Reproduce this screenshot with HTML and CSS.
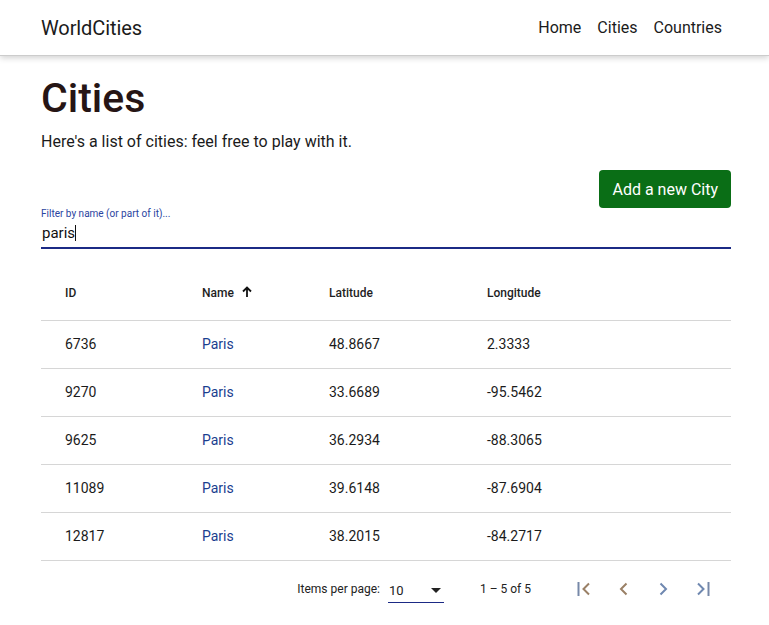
FILE: index.html
```html
<!DOCTYPE html>
<html>
<head>
<meta charset="utf-8">
<link rel="stylesheet" href="styles.css">
</head>
<body>
<header class="toolbar">
  <span class="brand">WorldCities</span>
  <nav class="nav">
    <a>Home</a>
    <a>Cities</a>
    <a>Countries</a>
  </nav>
</header>
<main class="content">
  <h1 class="title">Cities</h1>
  <p class="intro">Here's a list of cities: feel free to play with it.</p>
  <div class="actions">
    <button class="btn-add">Add a new City</button>
  </div>
  <div class="field">
    <label class="field-label">Filter by name (or part of it)...</label>
    <div class="field-input">paris<span class="caret"></span></div>
  </div>
  <table class="grid">
    <thead>
      <tr>
        <th class="c-id">ID</th>
        <th class="c-name">Name <svg class="sort" width="12" height="12" viewBox="0 0 12 12"><path d="M6 11V2M2 5.5 6 1.5l4 4" fill="none" stroke="#111" stroke-width="1.8"/></svg></th>
        <th class="c-lat">Latitude</th>
        <th class="c-lon">Longitude</th>
      </tr>
    </thead>
    <tbody>
      <tr><td class="c-id">6736</td><td class="c-name"><a>Paris</a></td><td>48.8667</td><td>2.3333</td></tr>
      <tr><td class="c-id">9270</td><td class="c-name"><a>Paris</a></td><td>33.6689</td><td>-95.5462</td></tr>
      <tr><td class="c-id">9625</td><td class="c-name"><a>Paris</a></td><td>36.2934</td><td>-88.3065</td></tr>
      <tr><td class="c-id">11089</td><td class="c-name"><a>Paris</a></td><td>39.6148</td><td>-87.6904</td></tr>
      <tr><td class="c-id">12817</td><td class="c-name"><a>Paris</a></td><td>38.2015</td><td>-84.2717</td></tr>
    </tbody>
  </table>
  <div class="paginator">
    <span class="pp-label">Items per page:</span>
    <div class="pp-select"><span>10</span><svg width="10" height="5" viewBox="0 0 10 5"><path d="M0 0h10L5 5z" fill="#222"/></svg></div>
    <span class="range">1 – 5 of 5</span>
    <div class="pg-btns">
      <svg width="24" height="24" viewBox="0 0 24 24"><path d="M5.5 5v14" stroke="#7688a8" stroke-width="2" fill="none"/><path d="M16 6.5 10.5 12l5.5 5.5" stroke="#9a8066" stroke-width="2" fill="none"/></svg>
      <svg width="24" height="24" viewBox="0 0 24 24"><path d="M14.5 6.5 9 12l5.5 5.5" stroke="#9a8066" stroke-width="2" fill="none"/></svg>
      <svg width="24" height="24" viewBox="0 0 24 24"><path d="M9.5 6.5 15 12l-5.5 5.5" stroke="#6f88b0" stroke-width="2" fill="none"/></svg>
      <svg width="24" height="24" viewBox="0 0 24 24"><path d="M8 6.5 13.5 12 8 17.5" stroke="#6f88b0" stroke-width="2" fill="none"/><path d="M18.5 5v14" stroke="#7688a8" stroke-width="2" fill="none"/></svg>
    </div>
  </div>
</main>
</body>
</html>
```
FILE: styles.css
```css
* { box-sizing: border-box; }
html, body { margin: 0; padding: 0; background: #fff; }
body { font-family: Roboto, "Noto Sans", Arial, sans-serif; color: #212121; }

.toolbar {
  height: 56px;
  display: flex;
  align-items: center;
  justify-content: space-between;
  padding: 0 47px 0 41px;
  border-bottom: 1px solid #ccc;
  box-shadow: 0 2px 6px rgba(0,0,0,0.18);
}
.brand { font-size: 20px; color: #1b1b1b; letter-spacing: -0.1px; }
.nav { display: flex; gap: 16px; }
.nav a { font-size: 16px; color: #1b1b1b; }

.content { padding: 0 38px 0 41px; }
.title {
  margin: 18px 0 0;
  font-size: 41px;
  font-weight: 500;
  line-height: 48px;
  color: #261515;
}
.intro { margin: 10px 0 0; font-size: 16px; line-height: 20px; color: #1b1b1b; }

.actions { display: flex; justify-content: flex-end; margin-top: 18px; }
.btn-add {
  height: 38px;
  padding: 0 13px;
  background: #0a6e16;
  color: #fff;
  border: none;
  border-radius: 4px;
  font-family: inherit;
  font-size: 16px;
}

.field { margin-top: 0; border-bottom: 2px solid #1b2a85; padding-bottom: 4px; }
.field-label { display: block; font-size: 10px; line-height: 12px; color: #2a44a0; margin-top: 0; }
.field-input { font-size: 15px; line-height: 20px; margin-top: 3px; color: #111; display: flex; align-items: center; padding-left: 1px; }
.caret { display: inline-block; width: 1px; height: 16px; background: #111; }

.grid { width: 100%; border-collapse: collapse; margin-top: 17px; }
.grid th, .grid td { text-align: left; padding: 0; border-bottom: 1px solid #d6d6d6; }
.grid th { height: 54px; font-size: 12px; font-weight: 500; color: #1e1e1e; }
.grid td { height: 48px; font-size: 14px; color: #1b1b1b; }
.c-id { width: 161px; padding-left: 24px !important; }
.c-name { width: 127px; }
.c-lat { width: 158px; }
.sort { vertical-align: -1px; margin-left: 4px; }
.grid td a { color: #1a3e8f; }

.paginator {
  height: 56px;
  display: flex;
  align-items: center;
  justify-content: flex-end;
  padding-right: 17px;
  font-size: 12px;
  color: #222;
}
.pp-label { margin-right: 8px; }
.pp-select {
  width: 56px;
  height: 24px;
  display: flex;
  align-items: center;
  justify-content: space-between;
  border-bottom: 1px solid #1b2a85;
  padding: 0 3px 0 1px;
  font-size: 13px;
  margin-top: 4px;
}
.range { margin-left: 36px; margin-right: 42px; }
.pg-btns { display: flex; gap: 15px; }
.pg-btns svg { display: block; }
```
